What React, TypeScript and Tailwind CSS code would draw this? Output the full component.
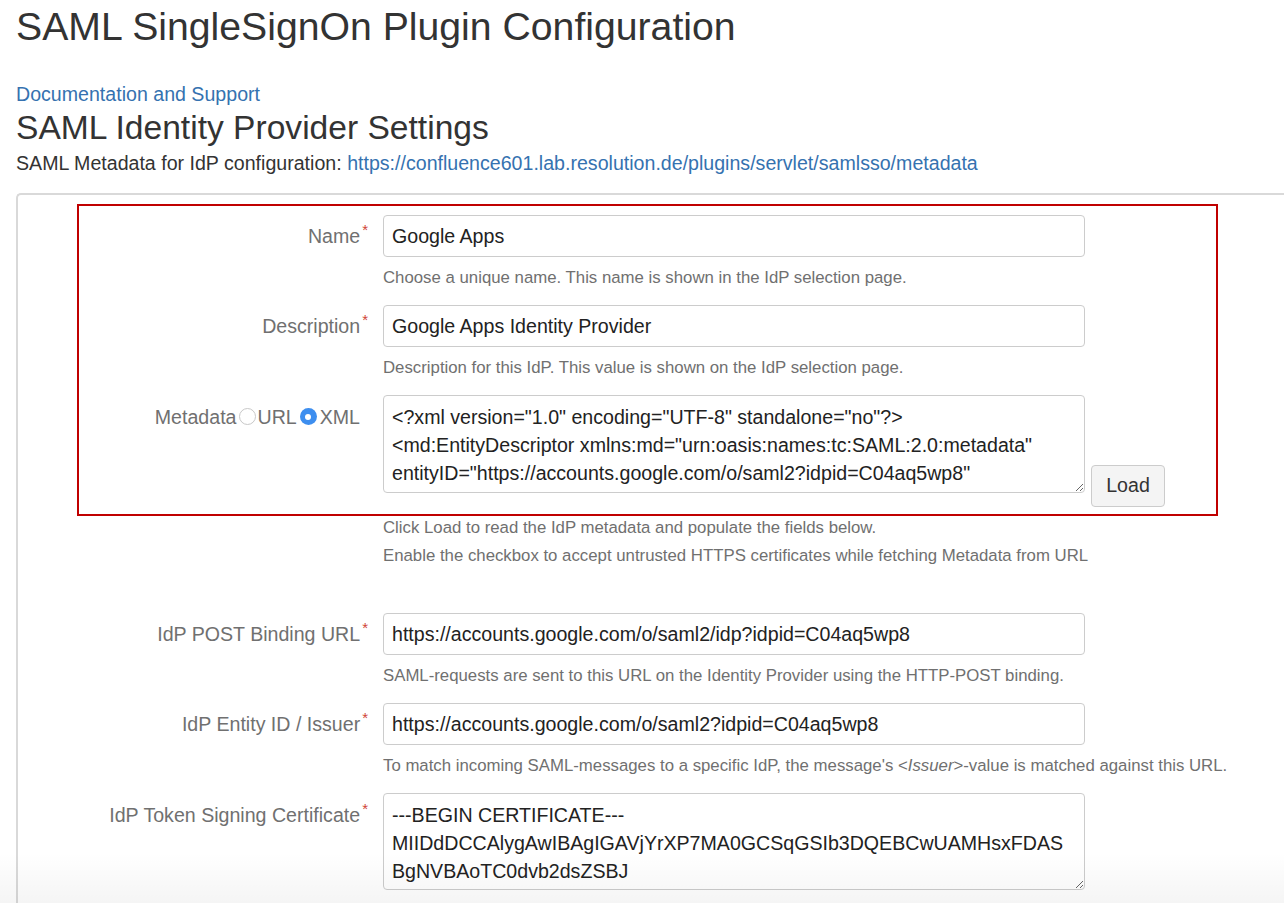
import React from "react";

const Req = () => (
  <span className="relative -top-[8px] ml-[2px] text-[15px] text-[#d04437]">*</span>
);

function Row({
  label,
  labelW,
  value,
  help,
}: {
  label: React.ReactNode;
  labelW: string;
  value: string;
  help: React.ReactNode;
}) {
  return (
    <div className="flex gap-[15px]">
      <div className={`${labelW} shrink-0 text-right text-[19.6px] leading-[42px] text-[#707070]`}>
        {label}
        <Req />
      </div>
      <div>
        <input
          readOnly
          defaultValue={value}
          className="block w-[702px] h-[42px] border border-[#cccccc] rounded-[4px] px-[8px] text-[19.6px] text-[#222] bg-white outline-none"
        />
        <div className="mt-[7px] mb-[13px] text-[16.8px] leading-[28px] text-[#707070]">{help}</div>
      </div>
    </div>
  );
}

const Radio = ({ checked }: { checked?: boolean }) =>
  checked ? (
    <span className="inline-flex align-middle relative -top-[2px] w-[17px] h-[17px] rounded-full bg-[#3d8eef] items-center justify-center mx-[3px]">
      <span className="w-[6px] h-[6px] rounded-full bg-white" />
    </span>
  ) : (
    <span className="inline-block align-middle relative -top-[2px] w-[17px] h-[17px] rounded-full border border-[#c8c8c8] bg-white mx-[2px]" />
  );

export default function App() {
  return (
    <div className="relative w-[1284px] h-[903px] overflow-hidden bg-white text-[#333] font-['Liberation_Sans',Arial,sans-serif]">
      <div className="pl-[16px]">
        <h1 className="pt-[4px] text-[39.2px] leading-[46px] text-[#333]">SAML SingleSignOn Plugin Configuration</h1>
        <a className="block w-fit mt-[30px] text-[19.6px] leading-[28px] text-[#3572b0]">Documentation and Support</a>
        <h2 className="text-[33.6px] leading-[40px] text-[#333]">SAML Identity Provider Settings</h2>
        <p className="mt-[1px] text-[19.6px] leading-[28px] text-[#333]">
          SAML Metadata for IdP configuration:{" "}
          <a className="text-[#3572b0]">https://confluence601.lab.resolution.de/plugins/servlet/samlsso/metadata</a>
        </p>

        <div className="mt-[16px] h-[720px] border-l-2 border-t-2 border-[#d9d9d9] rounded-tl-[5px]">
          <div className="ml-[59px] mt-[9px] w-[1141px] border-2 border-[#c00000] pt-[9px] pb-[7px]">
            <Row
              label="Name"
              labelW="w-[289px]"
              value="Google Apps"
              help="Choose a unique name. This name is shown in the IdP selection page."
            />
            <Row
              label="Description"
              labelW="w-[289px]"
              value="Google Apps Identity Provider"
              help="Description for this IdP. This value is shown on the IdP selection page."
            />
            <div className="flex gap-[15px]">
              <div className="w-[289px] shrink-0 pr-[8px] text-right text-[19.6px] leading-[44px] text-[#707070] whitespace-nowrap">
                Metadata
                <Radio />
                URL
                <Radio checked />
                XML
              </div>
              <div className="flex items-start">
                <textarea
                  readOnly
                  defaultValue={
                    '<?xml version="1.0" encoding="UTF-8" standalone="no"?>\n<md:EntityDescriptor xmlns:md="urn:oasis:names:tc:SAML:2.0:metadata"\nentityID="https://accounts.google.com/o/saml2?idpid=C04aq5wp8"'
                  }
                  className="block w-[702px] h-[98px] border border-[#cccccc] rounded-[4px] px-[8px] pt-[7px] pb-[5px] text-[19.6px] leading-[28px] text-[#222] bg-white outline-none overflow-hidden whitespace-pre"
                />
                <button className="ml-[6px] mt-[70px] w-[74px] h-[42px] border border-[#cccccc] rounded-[4px] bg-[#f4f4f4] text-[19.6px] text-[#333]">
                  Load
                </button>
              </div>
            </div>
          </div>

          <div className="ml-[365px] text-[16.8px] leading-[20px] text-[#707070]">
            <div className="mt-[2px]">Click Load to read the IdP metadata and populate the fields below.</div>
            <div className="mt-[8px]">Enable the checkbox to accept untrusted HTTPS certificates while fetching Metadata from URL</div>
          </div>

          <div className="mt-[47px]">
            <Row
              label="IdP POST Binding URL"
              labelW="w-[350px]"
              value="https://accounts.google.com/o/saml2/idp?idpid=C04aq5wp8"
              help="SAML-requests are sent to this URL on the Identity Provider using the HTTP-POST binding."
            />
            <Row
              label="IdP Entity ID / Issuer"
              labelW="w-[350px]"
              value="https://accounts.google.com/o/saml2?idpid=C04aq5wp8"
              help={
                <>
                  To match incoming SAML-messages to a specific IdP, the message's &lt;<i>Issuer</i>&gt;-value is matched
                  against this URL.
                </>
              }
            />
            <div className="flex gap-[15px]">
              <div className="w-[350px] shrink-0 text-right text-[19.6px] leading-[44px] text-[#707070]">
                IdP Token Signing Certificate
                <Req />
              </div>
              <textarea
                readOnly
                defaultValue={
                  "---BEGIN CERTIFICATE---\nMIIDdDCCAlygAwIBAgIGAVjYrXP7MA0GCSqGSIb3DQEBCwUAMHsxFDAS\nBgNVBAoTC0dvb2dsZSBJ"
                }
                className="block w-[702px] h-[97px] border border-[#cccccc] rounded-[4px] px-[8px] pt-[7px] pb-[4px] text-[19.6px] leading-[28px] text-[#222] bg-white outline-none overflow-hidden whitespace-pre"
              />
            </div>
          </div>
        </div>
      </div>
      <div className="pointer-events-none absolute bottom-0 left-0 right-0 h-[50px] bg-linear-to-b from-transparent to-black/[0.04]" />
    </div>
  );
}
